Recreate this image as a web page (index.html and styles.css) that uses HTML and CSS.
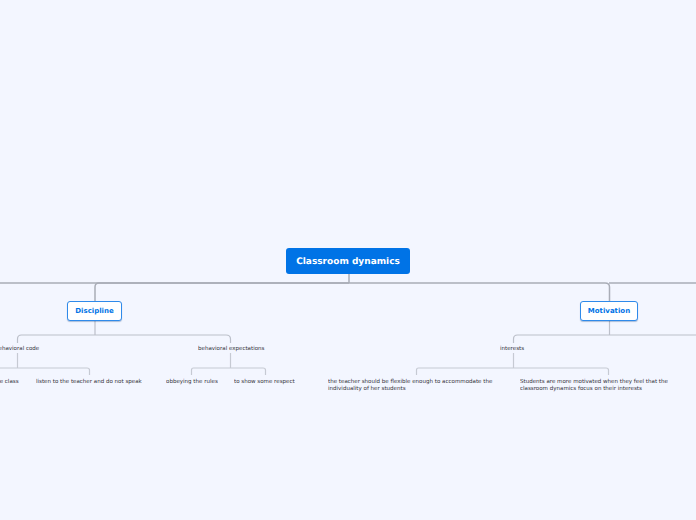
FILE: index.html
```html
<!DOCTYPE html>
<html lang="en">
<head>
<meta charset="utf-8">
<title>Classroom dynamics</title>
<link rel="stylesheet" href="styles.css">
</head>
<body>
<main class="map">
  <svg class="links" width="696" height="520" viewBox="0 0 696 520" fill="none">
    <g class="l1">
      <path d="M349 274V283"/>
      <path d="M0 283H605Q609.500 283 609.500 287V301"/>
      <path d="M95 301V287Q95 283 99 283H349"/>
      <path d="M609 283H696"/>
    </g>
    <g class="l2">
      <path d="M95 321V335"/>
      <path d="M17.500 343V339Q17.500 335 21.500 335H226Q230.500 335 230.500 339V343"/>
      <path d="M609.500 321V335"/>
      <path d="M513.500 343V339Q513.500 335 517.500 335H696"/>
    </g>
    <g class="l3">
      <path d="M17.500 353V368"/>
      <path d="M0 368H87Q89.500 368 89.500 370V375"/>
      <path d="M230.500 353V368"/>
      <path d="M191.500 375V370Q191.500 368 193.500 368H263Q265.500 368 265.500 370V375"/>
      <path d="M513.500 353V368"/>
      <path d="M416.500 375V370Q416.500 368 418.500 368H606Q608.500 368 608.500 370V375"/>
    </g>
  </svg>

  <div class="node root">Classroom dynamics</div>
  <div class="node main discipline">Discipline</div>
  <div class="node main motivation">Motivation</div>

  <div class="leaf t-code">behavioral code</div>
  <div class="leaf t-expect">behavioral expectations</div>
  <div class="leaf t-interests">interests</div>
  <div class="leaf t-class">the class</div>
  <div class="leaf t-listen">listen to the teacher and do not speak</div>
  <div class="leaf t-obey">obbeying the rules</div>
  <div class="leaf t-respect">to show some respect</div>
  <div class="leaf wrap t-flex">the teacher should be flexible enough to accommodate the individuality of her students</div>
  <div class="leaf wrap t-students">Students are more motivated when they feel that the classroom dynamics focus on their interests</div>
</main>
</body>
</html>
```

FILE: styles.css
```css
html, body {
  margin: 0;
  padding: 0;
  background: #f3f6ff;
}
.map {
  position: relative;
  width: 696px;
  height: 520px;
  overflow: hidden;
  background: #f3f6ff;
  font-family: "DejaVu Sans", sans-serif;
  text-rendering: geometricPrecision;
}
.links {
  position: absolute;
  left: 0;
  top: 0;
}
.l1 path { stroke: #a9adb7; stroke-width: 1.5; }
.l2 path { stroke: #bcc0ca; stroke-width: 1.2; }
.l3 path { stroke: #c6cad3; stroke-width: 1.2; }
.node {
  position: absolute;
  display: flex;
  align-items: center;
  justify-content: center;
  box-sizing: border-box;
  font-weight: 700;
  white-space: nowrap;
}
.root {
  left: 286px;
  top: 248px;
  width: 124px;
  height: 26px;
  padding-top: 2px;
  border-radius: 3px;
  background: #0073e6;
  color: #fff;
  font-size: 9px;
}
.main {
  top: 301px;
  height: 20px;
  border: 1.500px solid #2f8aea;
  border-radius: 3px;
  background: #fff;
  color: #0073e6;
  font-size: 7px;
  box-shadow: 0 1px 1px rgba(0, 60, 130, .3);
}
.discipline { left: 67px; width: 55px; }
.motivation { left: 580px; width: 58px; }
.leaf {
  position: absolute;
  font-size: 11.060px;
  line-height: 14px;
  color: #33333b;
  white-space: nowrap;
  transform: scale(.5);
  transform-origin: 0 0;
}
.wrap { white-space: normal; }
.t-code { left: -5px; top: 344.500px; }
.t-expect { left: 198px; top: 344.500px; }
.t-interests { left: 500px; top: 344.500px; }
.t-class { left: -6px; top: 377.500px; }
.t-listen { left: 36px; top: 377.500px; }
.t-obey { left: 166px; top: 377.500px; }
.t-respect { left: 234px; top: 377.500px; }
.t-flex { left: 328px; top: 377.500px; width: 344px; }
.t-students { left: 520px; top: 377.500px; width: 320px; }
```
